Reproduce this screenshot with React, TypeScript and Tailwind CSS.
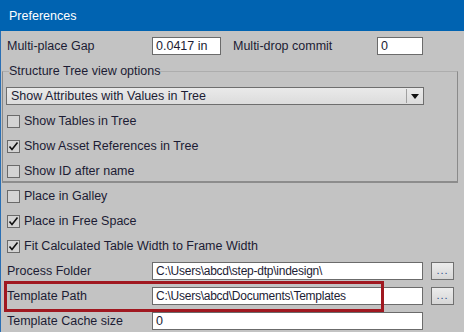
import React from "react";

const Check = ({ checked }: { checked?: boolean }) => (
  <div className="w-[13px] h-[13px] border border-[#6a6a6a] bg-[#d4d4d4] flex items-center justify-center shrink-0">
    {checked && (
      <svg width="11" height="11" viewBox="0 0 11 11">
        <polyline points="1.5,5.5 4,8.5 9.5,1.5" fill="none" stroke="#111" strokeWidth="1.6" />
      </svg>
    )}
  </div>
);

const CheckRow = ({ label, checked }: { label: string; checked?: boolean }) => (
  <div className="h-[20px] flex items-center">
    <Check checked={checked} />
    <span className="ml-[4px]">{label}</span>
  </div>
);

const TextBox = ({ value, className }: { value: string; className: string }) => (
  <div className={"h-[18px] bg-white border border-[#6b6b6b] flex items-center pl-[3px] whitespace-nowrap overflow-hidden " + className}>
    {value}
  </div>
);

const DotsButton = () => (
  <div className="ml-[8px] w-[23px] h-[18px] border border-[#707070] bg-gradient-to-b from-[#ececec] to-[#d6d6d6] flex items-end justify-center pb-[3px] text-[#2a4f8a] leading-none">
    <span className="text-[11px] tracking-[1px]">...</span>
  </div>
);

export default function App() {
  return (
    <div className="w-[464px] h-[332px] overflow-hidden bg-[#c3c3c3] text-[12.5px] leading-[14px] text-[#1c1c34] font-['Liberation_Sans','Arial',sans-serif] flex flex-col">
      <div className="h-[31px] bg-[#0063b1] text-white flex items-center pl-[9px] shrink-0">
        Preferences
      </div>
      <div className="flex-1 border-l border-[#2a6fb4] flex flex-col">
        {/* Row 1 */}
        <div className="mt-[6px] h-[18px] flex items-center">
          <span className="pl-[6px] w-[151px]">Multi-place Gap</span>
          <TextBox value="0.0417 in" className="w-[69px]" />
          <span className="ml-[12px] w-[144px]">Multi-drop commit</span>
          <TextBox value="0" className="w-[46px]" />
        </div>

        {/* Group box */}
        <fieldset className="mt-[9px] ml-[1px] w-[456px] border border-[#8a8a8a] border-t-[#adadad] border-b-2 border-b-[#8c8c8c] pl-[3px] pt-[9px]">
          <legend className="ml-[3px] leading-[14px]">Structure Tree view options</legend>
          <div className="w-[418px] h-[18px] border border-[#6e6e6e] bg-gradient-to-b from-[#eaeaea] to-[#dcdcdc] flex items-center">
            <span className="pl-[4px] flex-1">Show Attributes with Values in Tree</span>
            <div className="w-px h-[14px] bg-[#a0a0a0]" />
            <div className="w-[16px] flex items-center justify-center">
              <svg width="8" height="5" viewBox="0 0 8 5">
                <polygon points="0,0 8,0 4,5" fill="#111" />
              </svg>
            </div>
          </div>
          <div className="mt-[6px] flex flex-col gap-[5px] pl-[1px]">
            <CheckRow label="Show Tables in Tree" />
            <CheckRow label="Show Asset References in Tree" checked />
            <CheckRow label="Show ID after name" />
          </div>
        </fieldset>

        <div className="mt-[3px] flex flex-col gap-[5px] pl-[6px]">
          <CheckRow label="Place in Galley" />
          <CheckRow label="Place in Free Space" checked />
          <CheckRow label="Fit Calculated Table Width to Frame Width" checked />
        </div>

        <div className="mt-[6px] flex flex-col gap-[7px]">
          <div className="h-[18px] flex items-center">
            <span className="pl-[6px] w-[151px]">Process Folder</span>
            <TextBox value="C:\Users\abcd\step-dtp\indesign\" className="w-[271px] text-[12px] tracking-[-0.25px]" />
            <DotsButton />
          </div>
          <div className="relative h-[18px] flex items-center">
            <span className="pl-[6px] w-[151px]">Template Path</span>
            <TextBox value="C:\Users\abcd\Documents\Templates" className="w-[271px] text-[12px] tracking-[-0.25px]" />
            <DotsButton />
            <div className="absolute left-[3px] top-[-6px] w-[380px] h-[31px] border-[3px] border-[#a01820] pointer-events-none" />
          </div>
          <div className="h-[18px] flex items-center">
            <span className="pl-[6px] w-[151px]">Template Cache size</span>
            <TextBox value="0" className="w-[271px]" />
          </div>
        </div>
      </div>
    </div>
  );
}
